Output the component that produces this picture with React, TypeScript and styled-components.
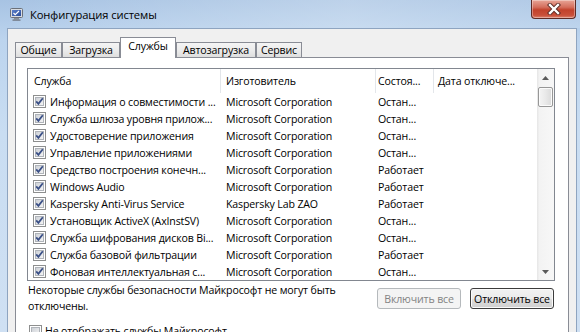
import styled, { createGlobalStyle } from "styled-components";

const GlobalStyle = createGlobalStyle`
  html, body {
    margin: 0;
    padding: 0;
    overflow: hidden;
  }
  body {
    font-family: "Open Sans", "Noto Sans", sans-serif;
    font-size: 10.6px;
    letter-spacing: -0.15px;
    color: #000;
  }
`

const Window = styled.div`
  width: 580px;
  height: 332px;
  display: flex;
  flex-direction: column;
  overflow: hidden;
  background: linear-gradient(180deg, #a7c3e3 0%, #bcd4ee 12%, #c9ddf2 40%, #cfe0f3 100%);
`

const TitleBar = styled.div`
  height: 28px;
  flex: 0 0 28px;
  display: flex;
  align-items: flex-start;
  padding-left: 10px;
  background: linear-gradient(90deg, rgba(255,255,255,0) 0%, rgba(255,255,255,0.25) 60%, rgba(255,255,255,0.1) 100%);
`

const AppIcon = styled.svg`
  width: 13px;
  height: 13px;
  margin-top: 8px;
`

const Title = styled.div`
  margin: 7px 0 0 7px;
  font-size: 11.2px;
  letter-spacing: -0.1px;
  line-height: 16px;
  color: #000;
  flex: 1;
`

const CloseButton = styled.div`
  width: 45px;
  height: 19px;
  margin-right: 4px;
  box-sizing: border-box;
  border: 1px solid #5e2b26;
  border-top: none;
  border-radius: 0 0 4px 4px;
  background: linear-gradient(180deg, #e8a597 0%, #d46e5c 40%, #c2422c 55%, #c9503a 85%, #dd8470 100%);
  box-shadow: inset 0 0 0 1px rgba(255, 255, 255, 0.35);
  display: flex;
  align-items: center;
  justify-content: center;
`

const FrameBody = styled.div`
  flex: 1;
  display: flex;
  padding: 0 3px 0 7px;
  min-height: 0;
`

const Client = styled.div`
  flex: 1;
  display: flex;
  flex-direction: column;
  background: #f0f0f0;
  border: 1px solid #8ea4c0;
  border-bottom: none;
  padding: 8px 7px 0 7px;
  min-height: 0;
`

const TabStrip = styled.div`
  display: flex;
  align-items: flex-end;
  height: 20px;
`

const Tab = styled.div<{ $active?: boolean; $w: number }>`
  position: relative;
  width: ${(p) => p.$w}px;
  box-sizing: border-box;
  border: 1px solid #898c95;
  border-bottom: none;
  text-align: center;
  white-space: nowrap;
  ${(p) =>
    p.$active
      ? `
    height: 21px;
    margin-bottom: -1px;
    z-index: 1;
    background: #fff;
    line-height: 17px;
  `
      : `
    height: 15px;
    background: linear-gradient(180deg, #f4f4f4 0%, #ececec 50%, #dedede 100%);
    line-height: 14px;
  `}
`

const TabPanel = styled.div`
  flex: 1;
  background: #fff;
  border: 1px solid #898c95;
  border-bottom: none;
  padding: 10px 13px 0 11px;
  display: flex;
  flex-direction: column;
`

const ListView = styled.div`
  height: 213px;
  box-sizing: border-box;
  border: 1px solid #828790;
  display: flex;
  background: #fff;
`

const ListContent = styled.div`
  flex: 1;
  overflow: hidden;
`

const Grid = styled.div<{ $h: number }>`
  display: grid;
  grid-template-columns: 193px 155px 58px 1fr;
  height: ${(p) => p.$h}px;
  align-items: center;
`

const HeaderCell = styled.div<{ $pad: number; $last?: boolean }>`
  height: 100%;
  box-sizing: border-box;
  display: flex;
  align-items: center;
  padding-left: ${(p) => p.$pad}px;
  border-right: ${(p) => (p.$last ? "none" : "1px solid #e3e6ea")};
  white-space: nowrap;
  overflow: hidden;
`

const Cell = styled.div<{ $pad: number }>`
  display: flex;
  align-items: center;
  gap: 4px;
  padding-left: ${(p) => p.$pad}px;
  white-space: nowrap;
  overflow: hidden;
`

const ScrollBar = styled.div`
  width: 17px;
  flex: 0 0 17px;
  display: flex;
  flex-direction: column;
  background: linear-gradient(90deg, #e6e6e6 0%, #f3f3f3 15%, #f7f7f7 100%);
`

const ScrollArrow = styled.div`
  height: 17px;
  display: flex;
  align-items: center;
  justify-content: center;
`

const ScrollTrack = styled.div`
  flex: 1;
  padding: 1px 1px 0 1px;
`

const ScrollThumb = styled.div`
  height: 20px;
  box-sizing: border-box;
  border: 1px solid #979797;
  border-radius: 2px;
  background: linear-gradient(90deg, #f4f4f4 0%, #e9e9e9 50%, #dadada 100%);
  box-shadow: inset 0 0 0 1px #fbfbfb;
`

const Footer = styled.div`
  display: flex;
  justify-content: space-between;
  margin: 1px 1px 0 1px;
`

const Note = styled.div`
  line-height: 16px;
`

const Buttons = styled.div`
  display: flex;
  gap: 9px;
  margin-top: 6px;
`

const Button = styled.button<{ $disabled?: boolean }>`
  width: 84px;
  height: 21px;
  padding: 0;
  font-family: inherit;
  font-size: 10.6px;
  letter-spacing: -0.15px;
  border-radius: 3px;
  white-space: nowrap;
  ${(p) =>
    p.$disabled
      ? `
    border: 1px solid #b5b9bc;
    background: #f4f4f4;
    color: #838383;
  `
      : `
    border: 1px solid #3c3c3c;
    background: linear-gradient(180deg, #f2f2f2 0%, #ebebeb 50%, #dddddd 51%, #cfcfcf 100%);
    box-shadow: inset 0 0 0 1px #fafafa;
    color: #000;
  `}
`

const Option = styled.div`
  display: flex;
  align-items: flex-start;
  gap: 3px;
  margin: 11px 0 0 2px;
  line-height: 13px;
`

const CheckBox = ({ checked }: { checked: boolean }) => (
  <svg width="13" height="13" viewBox="0 0 13 13" style={{ flex: "0 0 13px" }}>
    <defs>
      <linearGradient id="cbg" x1="0" y1="0" x2="1" y2="1">
        <stop offset="0" stopColor="#cbcfd5" />
        <stop offset="1" stopColor="#f6f6f6" />
      </linearGradient>
    </defs>
    <rect x="0.5" y="0.5" width="12" height="12" fill="#fff" stroke="#8e8f8f" />
    <rect x="2.5" y="2.5" width="8" height="8" fill="url(#cbg)" stroke="#b0b4ba" />
    {checked && (
      <path d="M3.2 6.4 L5.4 8.8 L9.8 3.2" fill="none" stroke="#3a4f86" strokeWidth="1.8" />
    )}
  </svg>
)

const tabs = [
  { label: "Общие", w: 47 },
  { label: "Загрузка", w: 58 },
  { label: "Службы", w: 56, active: true },
  { label: "Автозагрузка", w: 80 },
  { label: "Сервис", w: 46 },
]

const headers = [
  { title: "Служба", pad: 6 },
  { title: "Изготовитель", pad: 5 },
  { title: "Состоя...", pad: 2 },
  { title: "Дата отключе...", pad: 4 },
]

const services = [
  ["Информация о совместимости ...", "Microsoft Corporation", "Остан..."],
  ["Служба шлюза уровня прилож...", "Microsoft Corporation", "Остан..."],
  ["Удостоверение приложения", "Microsoft Corporation", "Остан..."],
  ["Управление приложениями", "Microsoft Corporation", "Остан..."],
  ["Средство построения конечн...", "Microsoft Corporation", "Работает"],
  ["Windows Audio", "Microsoft Corporation", "Работает"],
  ["Kaspersky Anti-Virus Service", "Kaspersky Lab ZAO", "Работает"],
  ["Установщик ActiveX (AxInstSV)", "Microsoft Corporation", "Остан..."],
  ["Служба шифрования дисков Bi...", "Microsoft Corporation", "Остан..."],
  ["Служба базовой фильтрации", "Microsoft Corporation", "Работает"],
  ["Фоновая интеллектуальная с...", "Microsoft Corporation", "Остан..."],
]

const App = () => {
  return (
    <Window>
      <GlobalStyle />
      <TitleBar>
        <AppIcon viewBox="0 0 13 13">
          <defs>
            <linearGradient id="scr" x1="0" y1="0" x2="1" y2="1">
              <stop offset="0" stopColor="#5b7fc9" />
              <stop offset="1" stopColor="#2a4d9a" />
            </linearGradient>
          </defs>
          <rect x="0.5" y="0.5" width="12" height="9" rx="1" fill="#d8dce2" stroke="#6b7079" />
          <rect x="2" y="2" width="9" height="6" fill="url(#scr)" />
          <path d="M3.5 5 L5.2 6.6 L9 3" fill="none" stroke="#fff" strokeWidth="1.2" />
          <rect x="4" y="10" width="5" height="1.5" fill="#8a8f97" />
          <rect x="2.5" y="11.5" width="8" height="1.2" fill="#6b7079" />
        </AppIcon>
        <Title>Конфигурация системы</Title>
        <CloseButton>
          <svg width="14" height="12" viewBox="0 0 14 12">
            <path d="M3 2 L11 10 M11 2 L3 10" stroke="#5a2a24" strokeWidth="4.2" strokeLinecap="square" />
            <path d="M3 2 L11 10 M11 2 L3 10" stroke="#ffffff" strokeWidth="2.4" strokeLinecap="square" />
          </svg>
        </CloseButton>
      </TitleBar>
      <FrameBody>
        <Client>
          <TabStrip>
            {tabs.map((t) => (
              <Tab key={t.label} $w={t.w} $active={t.active}>
                {t.label}
              </Tab>
            ))}
          </TabStrip>
          <TabPanel>
            <ListView>
              <ListContent>
                <Grid $h={24}>
                  {headers.map((h, i) => (
                    <HeaderCell key={h.title} $pad={h.pad} $last={i === headers.length - 1}>
                      {h.title}
                    </HeaderCell>
                  ))}
                </Grid>
                {services.map(([name, vendor, state]) => (
                  <Grid $h={17} key={name}>
                    <Cell $pad={5}>
                      <CheckBox checked />
                      {name}
                    </Cell>
                    <Cell $pad={5}>{vendor}</Cell>
                    <Cell $pad={2}>{state}</Cell>
                    <Cell $pad={4}></Cell>
                  </Grid>
                ))}
              </ListContent>
              <ScrollBar>
                <ScrollArrow>
                  <svg width="7" height="4" viewBox="0 0 7 4">
                    <path d="M0 4 L3.5 0 L7 4 Z" fill="#5a5a5a" />
                  </svg>
                </ScrollArrow>
                <ScrollTrack>
                  <ScrollThumb />
                </ScrollTrack>
                <ScrollArrow>
                  <svg width="7" height="4" viewBox="0 0 7 4">
                    <path d="M0 0 L3.5 4 L7 0 Z" fill="#5a5a5a" />
                  </svg>
                </ScrollArrow>
              </ScrollBar>
            </ListView>
            <Footer>
              <Note>
                Некоторые службы безопасности Майкрософт не могут быть
                <br />
                отключены.
              </Note>
              <Buttons>
                <Button $disabled>Включить все</Button>
                <Button>Отключить все</Button>
              </Buttons>
            </Footer>
            <Option>
              <CheckBox checked={false} />
              Не отображать службы Майкрософт
            </Option>
          </TabPanel>
        </Client>
      </FrameBody>
    </Window>
  )
}

export default App
